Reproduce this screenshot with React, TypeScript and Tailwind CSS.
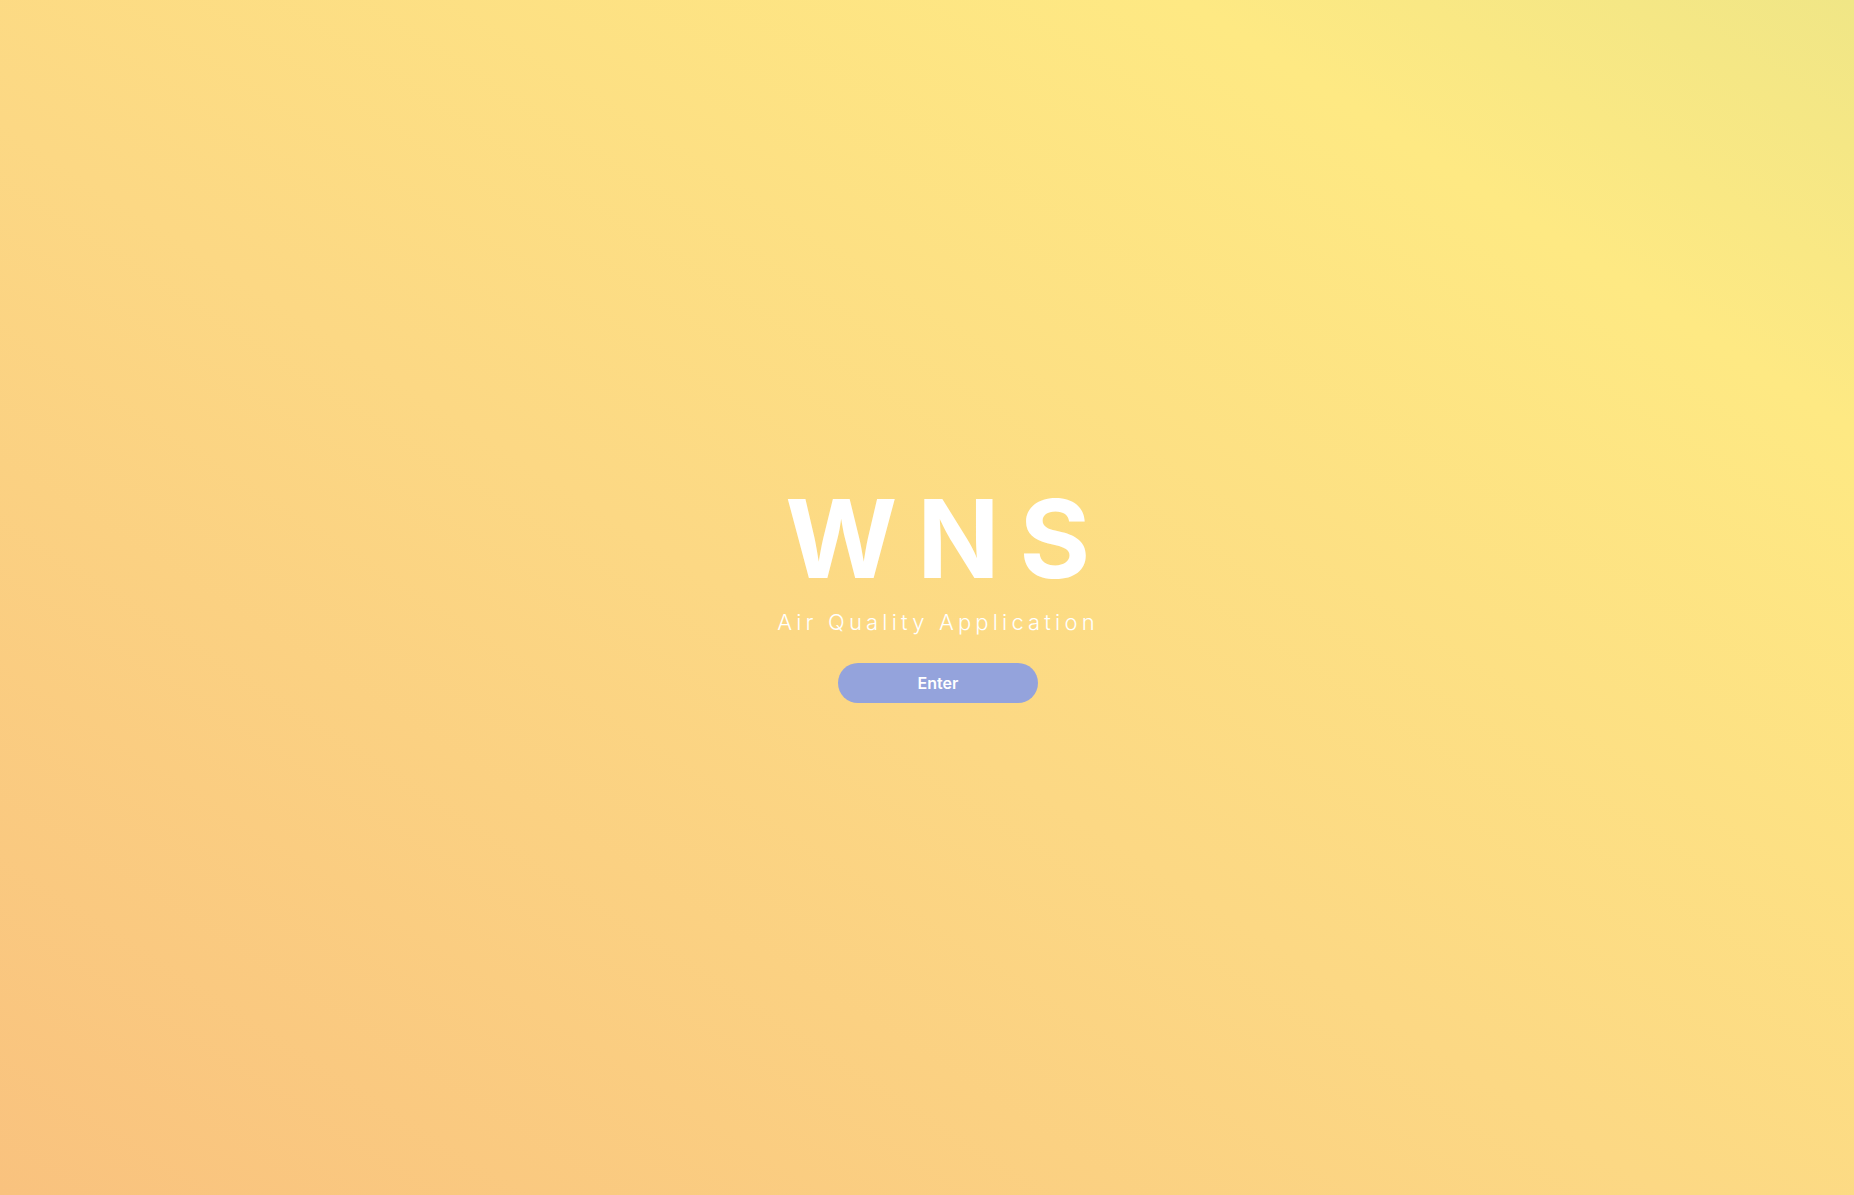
import React from "react";

export default function App() {
  return (
    <div
      className="flex min-h-screen w-full items-center justify-center bg-[linear-gradient(to_top_right,#f9c27e_0%,#fcd884_45%,#fee983_82%,#f0e686_100%)] pl-[22px] pb-[8px]"
      style={{ fontFamily: "Inter, 'Noto Sans', sans-serif" }}
    >
      <div className="flex flex-col items-center">
        <h1 className="pl-[0.18em] text-[108px] font-bold leading-none tracking-[0.185em] text-white">
          WNS
        </h1>
        <p className="mt-[13px] text-[22px] font-light tracking-[0.19em] text-white">
          Air Quality Application
        </p>
        <button className="mt-[24px] h-10 w-[200px] rounded-full bg-[#94a3dc] text-[16px] font-semibold text-white">
          Enter
        </button>
      </div>
    </div>
  );
}
